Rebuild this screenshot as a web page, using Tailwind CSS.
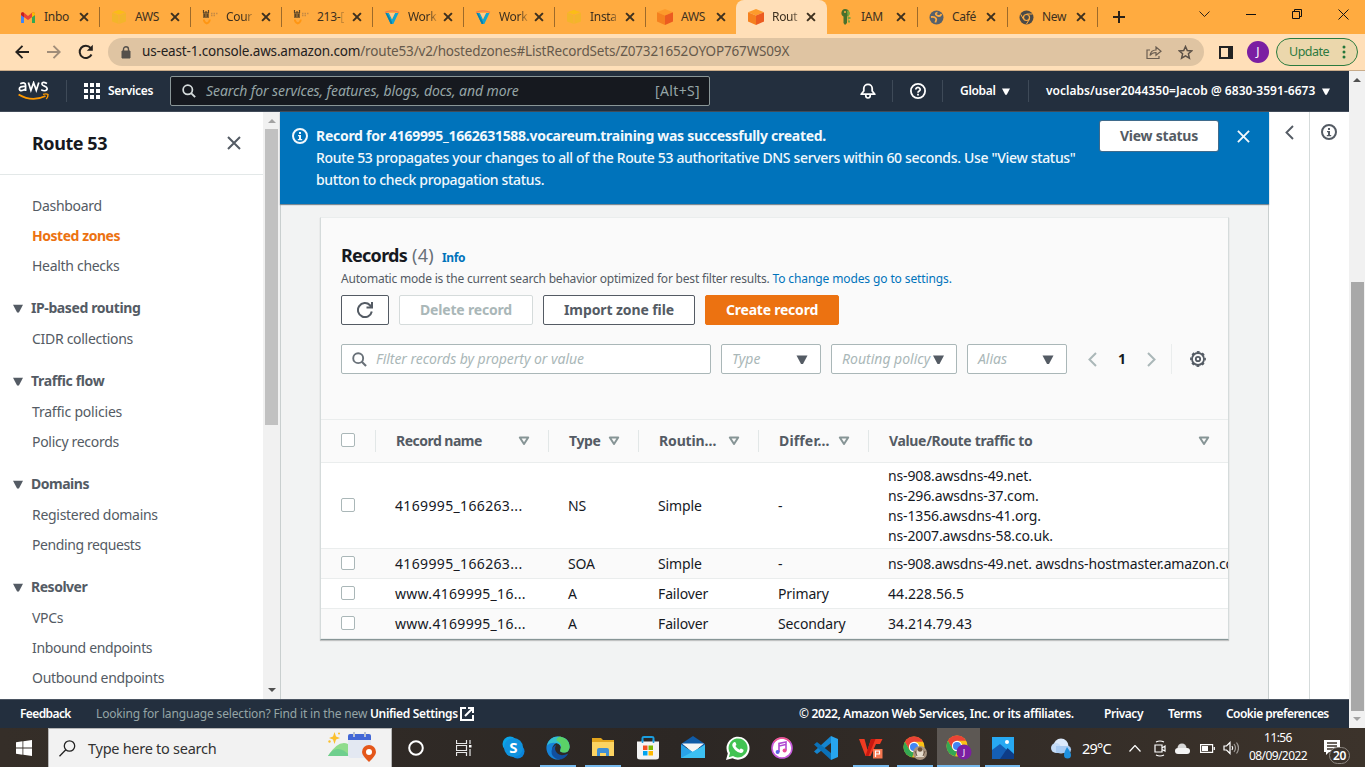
<!DOCTYPE html>
<html lang="en">
<head>
<meta charset="utf-8">
<title>Route 53 Console</title>
<script src="https://cdn.jsdelivr.net/npm/@tailwindcss/browser@4"></script>
</head>
<body class="h-[767px] w-[1365px] overflow-hidden bg-white font-['Noto_Sans','Liberation_Sans',sans-serif] text-sm text-[#16191f] antialiased">
<svg class="hidden">
  <defs>
    <symbol id="x" viewBox="0 0 10 10"><path d="M1.1 1.1 8.9 8.9M8.9 1.1 1.1 8.900" fill="none" stroke="currentColor" stroke-width="2"/></symbol>
    <symbol id="close" viewBox="0 0 14 14"><path d="M1 1 13 13M13 1 1 13" fill="none" stroke="currentColor" stroke-width="2"/></symbol>
    <symbol id="cube" viewBox="0 0 18 18"><path d="M9 1 17 4.3 9 7.6 1 4.3Z" fill="#fd9a2b"/><path d="M1 4.3 9 7.6V17L1 13.6Z" fill="#f5801f"/><path d="M17 4.3 9 7.6V17l8-3.4Z" fill="#ec5b20"/></symbol>
    <symbol id="ycube" viewBox="0 0 16 16"><path d="M8 1 15 3.5v9L8 15 1 12.500v-9Z" fill="#f3b52b"/><path d="M8 1 15 3.500 8 6 1 3.500Z" fill="#fbbd17"/><path d="M8 6v9M1 3.500 8 6l7-2.500" stroke="#ffa93f" fill="none" stroke-width=".8"/></symbol>
    <symbol id="voc" viewBox="0 0 18 16"><path d="M1 3h6v6H1Z" fill="#8f6630"/><path d="M1.500 1v3M4 2v2M6.500 1v3M2.500 5v3M5.500 5v3" stroke="#5d4526" stroke-width="1.200"/><path d="M9 4.500h7M9 6.500h5" stroke="#c58a45" stroke-width="1.300" stroke-dasharray="1.500 1"/><path d="M1.800 10.500c0 2 1.200 3.200 3 4 1.800-.8 3-2 3-4" fill="none" stroke="#ff9613" stroke-width="1.800"/></symbol>
    <symbol id="vee" viewBox="0 0 16 16"><path d="M1.500 4H5l3 6.500L11 4h3.500L9.300 15H6.700Z" fill="#14a5cf"/><path d="M1.500 4 3 4 8 13v2H6.700Z" fill="#0b7fa8"/><path d="M1 3.300Q8 .3 15 3.300" fill="none" stroke="#f3764a" stroke-width="1.300"/><path d="M5 4h6L8 10Z" fill="#ffc98c"/></symbol>
    <symbol id="tri" viewBox="0 0 11 9"><path d="M0 .5h11L6.500 9h-2Z" fill="currentColor"/></symbol>
    <symbol id="triO" viewBox="0 0 12 10"><path d="M1.800 1.500h8.400L6 8Z" fill="none" stroke="currentColor" stroke-width="2" stroke-linejoin="round"/></symbol>
    <symbol id="search" viewBox="0 0 16 16"><circle cx="6.600" cy="6.600" r="5.300" fill="none" stroke="currentColor" stroke-width="2"/><path d="M10.400 10.400 15 15" stroke="currentColor" stroke-width="2.200"/></symbol>
    <symbol id="info" viewBox="0 0 16 16"><circle cx="8" cy="8" r="7" fill="none" stroke="currentColor" stroke-width="2"/><path d="M7 4h2v2H7ZM6 7h3v4h1.200v1.300H5.800V11H7V8.300H6Z" fill="currentColor"/></symbol>
    <symbol id="chrome" viewBox="0 0 24 24"><circle cx="12" cy="12" r="11.500" fill="#fbc116"/><path d="M2.040 6.250A11.500 11.500 0 0 1 21.960 6.250H12L7 14.900Z" fill="#ea4335"/><path d="M2.040 6.250 7 14.900Q9 17.500 12 17.500L10 23.300A11.500 11.500 0 0 1 2.040 6.250" fill="#34a853"/><circle cx="12" cy="12" r="5.600" fill="#fff"/><circle cx="12" cy="12" r="4.400" fill="#4285f4"/></symbol>
  </defs>
</svg>

<!-- Browser tab strip -->
<header class="flex h-[34px] bg-[#ffab40] pl-2 text-[12px] tracking-[-0.3px] text-[#3d301f] [&_i]:mr-[-1px]">
  <div class="flex w-[91px] items-center py-[7px]"><svg class="ml-[13px] h-[11px] w-[14px] shrink-0" viewBox="0 0 14 11"><path d="M0 2v9h3V4.500Z" fill="#4285f4"/><path d="M14 2v9h-3V4.500Z" fill="#34a853"/><path d="M0 1.500Q1-.5 3 .8L7 4l4-3.200Q13-.5 14 1.500V3L7 8 0 3Z" fill="#ea4335"/><path d="M11 .8Q13-.5 14 1.500V3l-3 2.200Z" fill="#fbbc04"/><path d="M0 1.500V3l3 2.200V.8Q1-.5 0 1.500" fill="#c5221f"/></svg><span class="ml-[9px] w-[28px] shrink-0 whitespace-nowrap">Inbo</span><svg class="ml-[7px] size-[10px] shrink-0"><use href="#x"/></svg><i class="ml-auto h-5 w-px bg-[#9d6a2a]"></i></div>
  <div class="flex w-[91px] items-center py-[7px]"><svg class="ml-3 size-4 shrink-0"><use href="#ycube"/></svg><span class="ml-2 w-[28px] shrink-0 whitespace-nowrap">AWS</span><svg class="ml-[7px] size-[10px] shrink-0"><use href="#x"/></svg><i class="ml-auto h-5 w-px bg-[#9d6a2a]"></i></div>
  <div class="flex w-[91px] items-center py-[7px]"><svg class="ml-3 h-4 w-[18px] shrink-0"><use href="#voc"/></svg><span class="ml-1.5 w-[27px] shrink-0 whitespace-nowrap [mask-image:linear-gradient(to_right,#000_70%,#0003)]">Cour</span><svg class="ml-2 size-[10px] shrink-0"><use href="#x"/></svg><i class="ml-auto h-5 w-px bg-[#9d6a2a]"></i></div>
  <div class="flex w-[91px] items-center py-[7px]"><svg class="ml-3 h-4 w-[18px] shrink-0"><use href="#voc"/></svg><span class="ml-1.5 w-[28px] shrink-0 whitespace-nowrap">213-<span class="opacity-30">[</span></span><svg class="ml-[7px] size-[10px] shrink-0"><use href="#x"/></svg><i class="ml-auto h-5 w-px bg-[#9d6a2a]"></i></div>
  <div class="flex w-[91px] items-center py-[7px]"><svg class="ml-3 size-4 shrink-0"><use href="#vee"/></svg><span class="ml-2 w-[29px] shrink-0 whitespace-nowrap [mask-image:linear-gradient(to_right,#000_70%,#0003)]">Work</span><svg class="ml-[6px] size-[10px] shrink-0"><use href="#x"/></svg><i class="ml-auto h-5 w-px bg-[#9d6a2a]"></i></div>
  <div class="flex w-[91px] items-center py-[7px]"><svg class="ml-3 size-4 shrink-0"><use href="#vee"/></svg><span class="ml-2 w-[29px] shrink-0 whitespace-nowrap [mask-image:linear-gradient(to_right,#000_70%,#0003)]">Work</span><svg class="ml-[6px] size-[10px] shrink-0"><use href="#x"/></svg><i class="ml-auto h-5 w-px bg-[#9d6a2a]"></i></div>
  <div class="flex w-[91px] items-center py-[7px]"><svg class="ml-3 size-4 shrink-0"><use href="#ycube"/></svg><span class="ml-2 w-[28px] shrink-0 whitespace-nowrap [mask-image:linear-gradient(to_right,#000_70%,#0003)]">Insta</span><svg class="ml-[7px] size-[10px] shrink-0"><use href="#x"/></svg><i class="ml-auto h-5 w-px bg-[#9d6a2a]"></i></div>
  <div class="flex w-[91px] items-center py-[7px]"><svg class="ml-[11px] size-[18px] shrink-0"><use href="#cube"/></svg><span class="ml-[7px] w-[28px] shrink-0 whitespace-nowrap">AWS</span><svg class="ml-[7px] size-[10px] shrink-0"><use href="#x"/></svg></div>
  <div class="flex w-[91px] items-center rounded-t-lg bg-[#ffdfb8]"><svg class="ml-[11px] size-[18px] shrink-0"><use href="#cube"/></svg><span class="ml-[7px] w-[28px] shrink-0 whitespace-nowrap [mask-image:linear-gradient(to_right,#000_70%,#0003)]">Rout</span><svg class="ml-[6px] size-[10px] shrink-0"><use href="#x"/></svg></div>
  <div class="flex w-[90px] items-center py-[7px]"><svg class="ml-3 h-4 w-[14px] shrink-0" viewBox="0 0 14 16"><path d="M6 0a4.500 4 0 0 1 2 7.500V14l-2 2-1.500-2V7.500A4 4 0 0 1 6 0" fill="#48702c"/><path d="M8 1.500a3 3 0 0 1 1.500 5.500V8h2v2h-2v1.500h1.500v2H9Z" fill="#7aa63e"/><circle cx="6" cy="3" r="1" fill="#ffab40"/></svg><span class="ml-[8px] w-[29px] shrink-0 whitespace-nowrap">IAM</span><svg class="ml-[6px] size-[10px] shrink-0"><use href="#x"/></svg><i class="ml-auto h-5 w-px bg-[#9d6a2a]"></i></div>
  <div class="flex w-[90px] items-center py-[7px]"><svg class="ml-3 size-[15px] shrink-0" viewBox="0 0 15 15"><circle cx="7.500" cy="7.500" r="7" fill="#56616c"/><path d="M8.500 2.500C6.500 3 6 4.500 8 5.500s3.500.5 4.500-1.500M2 7c2.500-.5 4 0 5 1.500s-.5 2-.5 4" fill="none" stroke="#ffab40" stroke-width="1.800"/></svg><span class="ml-2 w-[28px] shrink-0 whitespace-nowrap">Café</span><svg class="ml-[6px] size-[10px] shrink-0"><use href="#x"/></svg><i class="ml-auto h-5 w-px bg-[#9d6a2a]"></i></div>
  <div class="flex w-[90px] items-center py-[7px]"><svg class="ml-3 size-[15px] shrink-0" viewBox="0 0 15 15"><circle cx="7.500" cy="7.500" r="7" fill="#4b4a48"/><circle cx="7.500" cy="7.500" r="3" fill="#4b4a48" stroke="#ffab40" stroke-width="1.200"/><path d="M7.500 4h6M4.500 9.200 1.700 4.300M10.500 9.200 7.500 14" stroke="#ffab40" stroke-width="1"/></svg><span class="ml-2 w-[28px] shrink-0 whitespace-nowrap">New</span><svg class="ml-[6px] size-[10px] shrink-0"><use href="#x"/></svg><i class="ml-auto h-5 w-px bg-[#9d6a2a]"></i></div>
  <svg class="mt-[11px] ml-[16px] size-3" viewBox="0 0 12 12"><path d="M6 0v12M0 6h12" stroke="#2a2118" stroke-width="2"/></svg>
  <svg class="mt-[11px] ml-[74px] h-[6px] w-[11px]" viewBox="0 0 11 6"><path d="m.5.5 5 5 5-5" fill="none" stroke="#2a2118"/></svg>
  <svg class="mt-[14px] ml-[36px] h-px w-[10px] bg-[#111]"></svg>
  <svg class="mt-[9px] ml-[36px] size-[10px]" viewBox="0 0 10 10"><path d="M2.500 2.500V.5h7v7h-2M.5 2.500h7v7h-7Z" fill="none" stroke="#111"/></svg>
  <svg class="mt-[9px] ml-[36px] size-[11px]" viewBox="0 0 11 11"><path d="m.5.5 10 10m0-10-10 10" stroke="#111"/></svg>
</header>

<!-- Address bar -->
<div class="flex h-[37px] items-center border-b border-[#c9ac8a] bg-[#ffdfb8] text-[#25211d]">
  <svg class="ml-[15px] h-[14px] w-[14px]" viewBox="0 0 14 14"><path d="M7.500.8 1.300 7l6.200 6.200M1.300 7H14" fill="none" stroke="currentColor" stroke-width="1.900"/></svg>
  <svg class="ml-[18px] h-[14px] w-[14px] text-[#a08d79]" viewBox="0 0 14 14"><path d="M6.500.8 12.700 7l-6.200 6.200M12.700 7H0" fill="none" stroke="currentColor" stroke-width="1.900"/></svg>
  <svg class="ml-[17px] size-4" viewBox="0 0 16 16"><path d="M13.500 10.500A6.200 6.200 0 1 1 12.600 3.800" fill="none" stroke="currentColor" stroke-width="2"/><path d="M14.800.8V6.800H8.800Z" fill="currentColor"/></svg>
  <div class="ml-[14px] flex h-[28px] w-[1096px] items-center rounded-full bg-[#dfc4a2]">
    <svg class="ml-[13px] h-[13px] w-[10px]" viewBox="0 0 10 13"><path d="M1 5h8v7H1Z" fill="#55504b" stroke="#55504b"/><path d="M2.500 5V3.200a2.500 2.500 0 0 1 5 0V5" fill="none" stroke="#55504b" stroke-width="1.400"/></svg>
    <span class="ml-[11px] w-[1000px] whitespace-nowrap text-[13.500px] tracking-[-0.165px] text-[#66594b]"><span class="text-[#25211d]">us-east-1.console.aws.amazon.com</span>/route53/v2/hostedzones#ListRecordSets/Z07321652OYOP767WS09X</span>
    <svg class="ml-[4px] h-[13px] w-[16px]" viewBox="0 0 16 13"><path d="M4 4H1v8.500h12V10M4 9.500c.5-4 3-5.500 6-5.500V1l5 4.300-5 4V6.500C7.500 6.500 5.500 7.300 4 9.500Z" fill="none" stroke="#6a5d50" stroke-width="1.200"/></svg>
    <svg class="ml-[16px] size-[15px]" viewBox="0 0 15 15"><path d="m7.500 1.500 1.800 4 4.400.4-3.300 2.900 1 4.300-3.900-2.300-3.900 2.300 1-4.300L1.300 5.900l4.400-.4Z" fill="none" stroke="#5c5147" stroke-width="1.500"/></svg>
  </div>
  <svg class="ml-[15px] h-[13px] w-[14px]" viewBox="0 0 14 13"><path d="M1 1h12v11H1Z" fill="#ffdfb8" stroke="#222" stroke-width="2"/><path d="M9 1h4v11H9Z" fill="#222"/></svg>
  <div class="ml-[14px] flex size-[22px] items-center justify-center rounded-full bg-[#7b1fa2] text-[12px] text-white">J</div>
  <div class="ml-[7px] flex h-[28px] w-[82px] items-center rounded-full border border-[#2b7b3f] bg-[#ebd7ac] pl-[12px] text-[12.500px] tracking-[-0.5px] text-[#2f7a41]">Update<svg class="ml-auto mr-[11px] h-[14px] w-[4px]" viewBox="0 0 4 14"><circle cx="2" cy="2" r="1.500" fill="#24763b"/><circle cx="2" cy="7" r="1.500" fill="#24763b"/><circle cx="2" cy="12" r="1.500" fill="#24763b"/></svg></div>
</div>

<div class="flex h-[657px]">
<div class="flex w-[1349px] flex-col">
  <!-- Console navigation -->
  <nav class="flex h-[41px] shrink-0 items-center border-b border-[#414b59] bg-[#232f3e] text-[12px] font-semibold text-white">
    <svg class="ml-[18px] h-[20px] w-[31px]" viewBox="0 0 31 20"><g fill="none" stroke="#fff" stroke-width="1.700"><path d="M2.200 2.800Q7.600.5 7.600 4.500V10M7.600 5.500Q1.300 5 1.300 8 2 10.500 5 9.300T7.600 7"/><path d="m10.400 1.500 2.500 7.800 2.700-7.600 2.700 7.600 2.500-7.800"/><path d="M29 2.500Q24-.1 23.900 3C24 5.500 29.200 4.800 29.200 7.700 28.800 10.700 25 9.800 23.200 8.800"/></g><path d="M.6 13.500Q14 21.500 27.500 15" fill="none" stroke="#f90" stroke-width="1.900"/><path d="M25 13.400Q28.500 12.400 30 13.500q.2 2.500-1.800 4.500" fill="none" stroke="#f90" stroke-width="1.400"/></svg>
    <i class="ml-[17px] h-[22px] w-px bg-[#3e4a58]"></i>
    <svg class="ml-[17px] size-4" viewBox="0 0 16 16" fill="#fff"><path d="M0 0h4v4H0ZM6 0h4v4H6ZM12 0h4v4h-4ZM0 6h4v4H0ZM6 6h4v4H6ZM12 6h4v4h-4ZM0 12h4v4H0ZM6 12h4v4H6ZM12 12h4v4h-4Z"/></svg>
    <span class="ml-2 w-[46px] tracking-[-0.35px]">Services</span>
    <div class="ml-[16px] flex h-[30px] w-[540px] items-center rounded-[2px] border border-[#8a9697] bg-[#16191f] pr-[9px] pl-[11px] text-sm font-normal text-[#95a5a6]">
      <svg class="size-[14px] text-[#d5dbdb]"><use href="#search" width="14" height="14"/></svg>
      <span class="ml-[10px] whitespace-nowrap italic tracking-[-0.08px]">Search for services, features, blogs, docs, and more</span>
      <span class="ml-auto tracking-[0.35px]">[Alt+S]</span>
    </div>
    <svg class="ml-[150px] size-4" viewBox="0 0 16 16"><path d="M1.200 11.200h13.600L12.200 8V5.500A4.200 4.200 0 0 0 3.800 5.500V8Z" fill="none" stroke="#fff" stroke-width="1.800" stroke-linejoin="round"/><path d="M5.800 11.500v1.300a2.200 2.200 0 0 0 4.400 0v-1.300" fill="none" stroke="#fff" stroke-width="1.700"/></svg>
    <i class="ml-[16px] h-[22px] w-px bg-[#3e4a58]"></i>
    <svg class="ml-[17px] size-4" viewBox="0 0 16 16"><circle cx="8" cy="8" r="7.100" fill="none" stroke="#fff" stroke-width="1.800"/><path d="M5.800 6.500a2.200 2 0 1 1 3.400 1.600Q8 8.800 8 9.700" fill="none" stroke="#fff" stroke-width="1.700"/><path d="M7.100 10.800h1.800v1.700H7.100Z" fill="#fff"/></svg>
    <i class="ml-[16px] h-[22px] w-px bg-[#3e4a58]"></i>
    <span class="ml-[17px] w-[36px] tracking-[-0.3px]">Global</span><svg class="ml-[6px] h-[7px] w-[8px]"><use href="#tri" width="8" height="7"/></svg>
    <i class="ml-[18px] h-[22px] w-px bg-[#3e4a58]"></i>
    <span class="ml-[17px] w-[270px] whitespace-nowrap tracking-[0.03px]">voclabs/user2044350=Jacob @ 6830-3591-6673</span><svg class="ml-[6px] h-[7px] w-[8px]"><use href="#tri" width="8" height="7"/></svg>
  </nav>

  <div class="flex h-[587px] shrink-0">
    <!-- Service menu -->
    <aside class="flex w-[263px] flex-col tracking-[-0.3px] text-[#545b64]">
      <div class="flex h-[63px] shrink-0 items-center border-b border-[#e3e8e8] pr-[22px] pl-8"><h2 class="text-lg font-bold tracking-[-0.45px] text-[#16191f]">Route 53</h2><svg class="ml-auto size-[14px]"><use href="#close"/></svg></div>
      <div class="pt-4 pl-8 [&>a]:flex [&>a]:h-[30px] [&>a]:items-center">
        <a>Dashboard</a><a class="font-bold tracking-[-0.46px] text-[#ec7211]">Hosted zones</a><a>Health checks</a>
        <h3 class="mt-[11px] -ml-[19px] flex h-8 items-center font-bold tracking-[-0.4px]"><svg class="mr-2 h-[9px] w-[10px]"><use href="#tri" width="10" height="9"/></svg>IP-based routing</h3>
        <a>CIDR collections</a>
        <h3 class="mt-[11px] -ml-[19px] flex h-8 items-center font-bold tracking-[-0.36px]"><svg class="mr-2 h-[9px] w-[10px]"><use href="#tri" width="10" height="9"/></svg>Traffic flow</h3>
        <a class="tracking-[-0.2px]">Traffic policies</a><a>Policy records</a>
        <h3 class="mt-[11px] -ml-[19px] flex h-8 items-center font-bold tracking-[-0.48px]"><svg class="mr-2 h-[9px] w-[10px]"><use href="#tri" width="10" height="9"/></svg>Domains</h3>
        <a>Registered domains</a><a class="tracking-[-0.4px]">Pending requests</a>
        <h3 class="mt-[11px] -ml-[19px] flex h-8 items-center font-bold tracking-[-0.48px]"><svg class="mr-2 h-[9px] w-[10px]"><use href="#tri" width="10" height="9"/></svg>Resolver</h3>
        <a>VPCs</a><a class="tracking-[-0.36px]">Inbound endpoints</a><a>Outbound endpoints</a>
      </div>
    </aside>
    <div class="flex w-[17px] flex-col items-center bg-[#f1f1f1]">
      <svg class="mt-[7px] h-[4px] w-[8px]" viewBox="0 0 8 4"><path d="m4 0 4 4H0Z" fill="#a3a3a3"/></svg>
      <div class="mt-[6px] h-[296px] w-[13px] bg-[#c1c1c1]"></div>
      <svg class="mt-auto mb-[7px] h-[4px] w-[8px]" viewBox="0 0 8 4"><path d="m4 4 4-4H0Z" fill="#505050"/></svg>
    </div>

    <main class="flex w-[989px] flex-col border-r border-l border-[#c9cfcf] bg-[#f2f3f3]">
      <div class="relative -mx-px flex h-[92px] w-[989px] shrink-0 bg-[#0073bb] text-[#f2f8fc] shadow-[0_1px_1px_#7b8a94]">
        <svg class="mt-4 ml-3 size-4"><use href="#info"/></svg>
        <div class="mt-[13px] ml-2 w-[784px] whitespace-nowrap leading-[22px]">
          <p class="font-bold tracking-[-0.28px]">Record for 4169995_1662631588.vocareum.training was successfully created.</p>
          <p class="font-medium tracking-[-0.34px]">Route 53 propagates your changes to all of the Route 53 authoritative DNS servers within 60 seconds. Use "View status"<br>button to check propagation status.</p>
        </div>
        <button class="mt-[9px] h-[30px] w-[118px] rounded-[2px] bg-white font-bold tracking-[-0.24px] text-[#545b64] shadow-[0_0_0_1px_#3f6b8c]">View status</button>
        <svg class="mt-[18px] ml-[19px] size-[13px]"><use href="#close"/></svg>
      </div>

      <!-- Records table -->
      <section class="mt-[13px] ml-[39px] flex h-[423px] w-[909px] flex-col border border-[#d5dbdb] border-t-[#eaeded] border-b-[#879596] bg-[#fafafa] shadow-[0_1px_1px_#0003]">
        <div class="h-[201px] shrink-0 px-5 pt-[23px]">
          <div class="flex h-6 items-baseline text-lg"><h1 class="font-bold tracking-[-0.74px]">Records</h1><span class="ml-[5px] tracking-[0.3px] text-[#687078]">(4)</span><a class="ml-[8px] text-xs font-bold tracking-[-0.4px] text-[#0073bb]">Info</a></div>
          <p class="mt-1 text-xs leading-5 tracking-[-0.2px] whitespace-nowrap text-[#545b64]">Automatic mode is the current search behavior optimized for best filter results. <a class="tracking-[-0.11px] text-[#0073bb]">To change modes go to settings.</a></p>
          <div class="mt-[6px] flex gap-[10px] font-bold tracking-[-0.14px] [&>button]:h-[30px] [&>button]:rounded-[2px] [&>button]:border">
            <button class="flex w-[48px] items-center justify-center border-[#545b64] bg-white text-[#545b64]"><svg class="size-4" viewBox="0 0 16 16"><path d="M14.800 9.500A7 7 0 1 1 13 3.200L15 5.300M15 0v5.500H9.500" fill="none" stroke="currentColor" stroke-width="2"/></svg></button>
            <button class="w-[134px] border-[#d5dbdb] bg-white tracking-[-0.18px] text-[#aab7b8]">Delete record</button>
            <button class="w-[152px] border-[#545b64] bg-white tracking-[-0.1px] text-[#545b64]">Import zone file</button>
            <button class="w-[134px] border-[#ec7211] bg-[#ec7211] tracking-[-0.22px] text-white">Create record</button>
          </div>
          <div class="mt-[19px] flex h-[30px] items-center italic text-[#aab7b8] [&>div]:flex [&>div]:h-[30px] [&>div]:items-center [&>div]:rounded-[2px] [&>div]:border [&>div]:border-[#aab7b8] [&>div]:bg-white [&>div]:pl-[10px]">
            <div class="w-[370px]"><svg class="size-[15px] text-[#687078]"><use href="#search" width="15" height="15"/></svg><span class="ml-[9px] tracking-[-0.04px]">Filter records by property or value</span></div>
            <div class="ml-[10px] w-[100px] text-[#aab7b8]">Type<svg class="ml-auto mr-[12px] h-[9px] w-[12px] text-[#545b64]"><use href="#tri"/></svg></div>
            <div class="ml-[10px] w-[126px] whitespace-nowrap">Routing policy<svg class="ml-auto mr-[12px] h-[9px] w-[11px] text-[#545b64]"><use href="#tri"/></svg></div>
            <div class="ml-[10px] w-[100px]">Alias<svg class="ml-auto mr-[12px] h-[9px] w-[12px] text-[#545b64]"><use href="#tri"/></svg></div>
            <svg class="ml-[21px] h-[15px] w-[9px]" viewBox="0 0 9 15"><path d="M8 1 1.500 7.500 8 14" fill="none" stroke="#aab7b8" stroke-width="2"/></svg>
            <span class="ml-[21px] w-2 font-bold not-italic text-[#16191f]">1</span>
            <svg class="ml-[21px] h-[15px] w-[9px]" viewBox="0 0 9 15"><path d="m1 1 6.500 6.500L1 14" fill="none" stroke="#aab7b8" stroke-width="2"/></svg>
            <i class="ml-[15px] h-[30px] w-px bg-[#eaeded]"></i>
            <svg class="ml-[18px] size-4" viewBox="0 0 16 16" fill="none" stroke="#545b64"><circle cx="8" cy="8" r="6" stroke-width="1.800"/><circle cx="8" cy="8" r="7.100" stroke-width="1.600" stroke-dasharray="2.800 2.776" stroke-dashoffset="1.400"/><circle cx="8" cy="8" r="2.200" stroke-width="1.800"/></svg>
          </div>
        </div>
        <div class="grid h-[44px] shrink-0 grid-cols-[54px_173px_90px_120px_110px_1fr] items-center border-y border-[#eaeded] font-bold tracking-[-0.34px] text-[#545b64] [&>div]:flex [&>div]:h-[22px] [&>div]:items-center [&>div]:border-l [&>div]:border-[#e2e7e7] [&>div]:pl-[20px] [&_svg]:ml-auto [&_svg]:h-[10px] [&_svg]:w-[12px] [&_svg]:text-[#879596]">
          <span class="mb-[3px] ml-5 size-[14px] rounded-[2px] border border-[#aab7b8] bg-white"></span>
          <div><span class="tracking-[-0.52px]">Record name</span><svg class="mr-[18px]"><use href="#triO"/></svg></div>
          <div>Type<svg class="mr-[18px]"><use href="#triO"/></svg></div>
          <div><span class="tracking-[-0.15px]">Routin…</span><svg class="mr-[18px]"><use href="#triO"/></svg></div>
          <div><span class="tracking-[0.15px]">Differ…</span><svg class="mr-[18px]"><use href="#triO"/></svg></div>
          <div><span class="tracking-[-0.34px]">Value/Route traffic to</span><svg class="mr-[18px]"><use href="#triO"/></svg></div>
        </div>
        <div class="flex min-h-0 grow flex-col tracking-[-0.14px] [&>div]:grid [&>div]:shrink-0 [&>div]:grid-cols-[74px_173px_90px_120px_110px_1fr] [&>div]:items-center [&>div]:overflow-hidden [&>div]:border-b [&>div]:border-[#eaeded] [&>div]:whitespace-nowrap [&>div>i]:mb-px [&>div>i]:ml-5 [&>div>i]:size-[14px] [&>div>i]:rounded-[2px] [&>div>i]:border [&>div>i]:border-[#aab7b8] [&>div>i]:bg-white">
          <div class="h-[86px] bg-white"><i></i><span class="tracking-[0.35px]">4169995_166263...</span><span>NS</span><span>Simple</span><span>-</span><p class="leading-5">ns-908.awsdns-49.net.<br>ns-296.awsdns-37.com.<br>ns-1356.awsdns-41.org.<br>ns-2007.awsdns-58.co.uk.</p></div>
          <div class="h-[30px]"><i></i><span class="tracking-[0.35px]">4169995_166263...</span><span>SOA</span><span>Simple</span><span>-</span><span class="w-[340px] overflow-hidden">ns-908.awsdns-49.net. awsdns-hostmaster.amazon.com</span></div>
          <div class="h-[30px] bg-white"><i></i><span class="tracking-[0.3px]">www.4169995_16...</span><span>A</span><span>Failover</span><span>Primary</span><span class="tracking-[0.06px]">44.228.56.5</span></div>
          <div class="h-[30px]"><i></i><span class="tracking-[0.3px]">www.4169995_16...</span><span>A</span><span>Failover</span><span>Secondary</span><span class="tracking-[0.06px]">34.214.79.43</span></div>
        </div>
      </section>
    </main>

    <div class="flex w-[41px] justify-center border-r border-[#d5dbdb] text-[#545b64]"><svg class="mt-[13px] h-[15px] w-[9px]" viewBox="0 0 9 15"><path d="M8 1 1.500 7.500 8 14" fill="none" stroke="currentColor" stroke-width="1.900"/></svg></div>
    <div class="flex w-[39px] pl-[11px] text-[#545b64]"><svg class="mt-[12px] size-4"><use href="#info"/></svg></div>
  </div>

  <footer class="flex h-[29px] items-center border-t border-[#4b5562] bg-[#232f3e] px-5 text-xs font-semibold whitespace-nowrap text-white">
    <span class="w-[51px] tracking-[-0.6px]">Feedback</span>
    <span class="ml-[25px] w-[274px] font-normal tracking-[-0.15px] text-[#95a5a6]">Looking for language selection? Find it in the new</span>
    <span class="w-[88px] tracking-[-0.35px]">Unified Settings</span>
    <svg class="ml-[2px] size-[14px]" viewBox="0 0 14 14"><path d="M6 1H1v12h12V8M8 1h5v5M13 1 5 9" fill="none" stroke="#fff" stroke-width="2"/></svg>
    <span class="ml-auto w-[275px] tracking-[-0.34px]">© 2022, Amazon Web Services, Inc. or its affiliates.</span>
    <span class="ml-[30px] w-[38px] tracking-[-0.45px]">Privacy</span>
    <span class="ml-[26px] w-[33px] tracking-[-0.45px]">Terms</span>
    <span class="ml-[25px] w-[103px] tracking-[-0.55px]">Cookie preferences</span>
  </footer>
</div>
<div class="flex w-4 flex-col items-end bg-[#f1f1f1]">
  <svg class="mt-[7px] mr-[4px] h-[4px] w-[8px]" viewBox="0 0 8 4"><path d="m4 0 4 4H0Z" fill="#505050"/></svg>
  <div class="mt-[200px] mr-px h-[429px] w-[13px] bg-[#a8a8a8]"></div>
  <svg class="mt-[6px] mr-[4px] h-[4px] w-[8px]" viewBox="0 0 8 4"><path d="m4 4 4-4H0Z" fill="#a3a3a3"/></svg>
</div>
</div>

<!-- Desktop taskbar -->
<div class="flex h-[39px] bg-linear-to-r from-[#352e28] via-[#2c2724] to-[#3c332b] text-white">
  <div class="flex w-12 items-center justify-center"><svg class="size-4" viewBox="0 0 16 16" fill="#fff"><path d="M0 2.200 6.500 1.300V7.600H0ZM7.300 1.200 16 0V7.600H7.300ZM0 8.400h6.500v6.300L0 13.800ZM7.300 8.400H16V16l-8.700-1.200Z"/></svg></div>
  <div class="flex w-[344px] items-center border border-b-0 border-[#b5b5b5] bg-[#f2f2f2] text-[#333]">
    <svg class="ml-[10px] size-[17px]" viewBox="0 0 17 17"><circle cx="10.500" cy="6" r="5.200" fill="none" stroke="#222" stroke-width="1.300"/><path d="M6.800 9.800.5 16.200" stroke="#222" stroke-width="1.300"/></svg>
    <span class="ml-[12px] text-[14.500px] tracking-[-0.27px]">Type here to search</span>
    <svg class="mr-[14px] mb-[2px] ml-auto h-[30px] w-[49px]" viewBox="0 0 49 30"><path d="M0 24Q8 11 16 11T22 24Z" fill="#8fdc8c"/><path d="M0 24Q4 17 10 17T22 24Z" fill="#6fcf8e"/><path d="M6.500 0 8 4.500l4 1.500-4 1.500L6.500 12 5 7.500 1 6l4-1.500Z" fill="#fbc02d"/><circle cx="11" cy="1.500" r="1" fill="#fbc02d"/><circle cx="1.500" cy="9.500" r="1.200" fill="#fbc02d"/><rect x="20" y="2" width="23" height="24" rx="3" fill="#e3e8f2"/><path d="M20 8V4q0-2 2-2h19q2 0 2 2v4Z" fill="#4267d6"/><path d="M26 0v5M37 0v5" stroke="#b8c1d1" stroke-width="2"/><path d="M41 13a7 7 0 0 1 7 7q0 3.500-7 10-7-6.500-7-10a7 7 0 0 1 7-7" fill="#e4571b"/><circle cx="41" cy="20" r="3" fill="#fff"/></svg>
  </div>
  <div class="flex w-12 items-center justify-center"><svg class="size-4" viewBox="0 0 16 16"><circle cx="8" cy="8" r="6.800" fill="none" stroke="#fff" stroke-width="2"/></svg></div>
  <div class="flex w-12 items-center justify-center"><svg class="size-4" viewBox="0 0 16 16"><path d="M.5 0v3.500h10V0M.5 16v-3.500h10V16M.5 5.500h10v5H.5ZM14 0v4M14 9v7" fill="none" stroke="#e8e8e8" stroke-width="1.200"/><path d="M13 5h2.500v2.500H13Z" fill="#fff"/></svg></div>
  <div class="flex w-[47px] items-center justify-center pl-[3px]"><svg class="size-[23px]" viewBox="0 0 23 23"><circle cx="8" cy="8" r="7.500" fill="#0aa5e8"/><circle cx="15.500" cy="15.500" r="7" fill="#0a84dc"/><circle cx="11.500" cy="11.500" r="9.500" fill="#1093de"/><text x="11.500" y="17" text-anchor="middle" font-family="Noto Sans" font-size="15" font-weight="700" fill="#fff">S</text></svg></div>
  <div class="flex w-[45px] items-center justify-center"><div class="flex h-full w-9 items-center justify-center border-b-2 border-[#76b9ed] pt-0.5"><svg class="size-6" viewBox="0 0 24 24"><path d="M.4 12A11.600 11.600 0 0 1 12 .4q5 0 6 6Q14 5.500 10.500 7 5 9.500 7 16q2 5.500 7 7.300-1 .3-2 .3A11.600 11.600 0 0 1 .4 12" fill="#1683d8"/><path d="M1 9.500Q3.500.4 12 .4 23.600 1 23.600 11q-.5 5.500-5.600 5.500-5 0-3.500-3Q16 8.500 10 7 4 5.800 1 9.500" fill="#35bfd0"/><path d="M14 .6q9.600 2.400 9.600 10.400-.5 5.500-5.600 5.500-5 0-3.500-3 2.500-6-4-9Q10 2 14 .6" fill="#5bd267"/><path d="M10.200 9Q7.500 13 11 17t11.300.5Q19 23.600 12.500 23.600 5 21.500 5.500 15 6.500 10 10.200 9" fill="#114f9e"/></svg></div></div>
  <div class="flex w-[45px] items-center justify-center"><div class="flex h-full w-9 items-center justify-center border-b-2 border-[#76b9ed] pt-0.5"><svg class="h-[19px] w-[22px]" viewBox="0 0 22 19"><path d="M0 0h9l2 2h11v16H0Z" fill="#e3a51d"/><path d="M0 4h22v14H0Z" fill="#fcd462"/><path d="M5 18v-6q0-2 2-2h8q2 0 2 2v6h-3v-3H8v3Z" fill="#3f8fd4"/></svg></div></div>
  <div class="flex w-[45px] items-center justify-center"><svg class="size-6" viewBox="0 0 24 24"><path d="M6.500 7V2Q6.500 1 8 1h8q1.500 0 1.500 1v5" fill="none" stroke="#1a9ee0" stroke-width="2"/><path d="M1 5.500h22V21q0 2.500-3 2.500H4Q1 23.500 1 21Z" fill="#f3f3f3"/><path d="M6.500 4v3M17.500 4v3" stroke="#1a9ee0" stroke-width="1.500"/><path d="M7 9.500h4.500V14H7Z" fill="#f25022"/><path d="M12.500 9.500H17V14h-4.500Z" fill="#7fba00"/><path d="M7 15h4.500v4.500H7Z" fill="#00a4ef"/><path d="M12.500 15H17v4.500h-4.500Z" fill="#ffb900"/></svg></div>
  <div class="flex w-[45px] items-center justify-center"><svg class="h-[23px] w-6" viewBox="0 0 24 23"><path d="M0 8 12 0l12 8v3H0Z" fill="#105ba6"/><path d="M2 8h20l-10 9Z" fill="#f5f5f5"/><path d="M0 8.500 12 16l12-7.500V22H0Z" fill="#29a3e8"/><path d="M1 7.500h22L12 15.500Z" fill="#f5f5f5"/><path d="M0 22 24 9v13Z" fill="#3cc0f2"/></svg></div>
  <div class="flex w-[45px] items-center justify-center"><svg class="size-6" viewBox="0 0 24 24"><path d="M0 24 1.800 17.500A11.500 11.500 0 1 1 6.500 22.300Z" fill="#fff"/><path d="M2.800 21.200 4 17A9.500 9.500 0 1 1 7 20Z" fill="#42c352"/><path d="M8.500 6q.8-.3 1.200.7l.7 1.800q0 .6-1 1.600 1.400 2.600 4.200 3.700.9-1.400 1.500-1.300l2.400 1.200q.4 3-2.800 3.300-2.500 0-5.700-3-2.800-3-2.800-5Q6.500 6.500 8.500 6" fill="#fff"/></svg></div>
  <div class="flex w-[44px] items-center justify-center"><svg class="size-[22px]" viewBox="0 0 22 22"><circle cx="11" cy="11" r="10" fill="#fff" stroke="#c65adb" stroke-width="1.600"/><path d="M3 5A10 10 0 0 1 19 5" fill="none" stroke="#f0568b" stroke-width="1.600"/><path d="M8 15V6.500l7-1.500v8.500M8 9l7-1.500" fill="none" stroke="#b14bd3" stroke-width="1.600"/><circle cx="6.600" cy="15" r="2" fill="#5d63e6"/><circle cx="13.600" cy="13.600" r="2" fill="#e94c94"/></svg></div>
  <div class="flex w-[44px] items-center justify-center"><svg class="size-6" viewBox="0 0 24 24"><path d="M17 0 24 3v18l-7 3Z" fill="#27a5ef"/><path d="M17 0v7L3 18 0 15.500Z" fill="#1585cf"/><path d="M17 24v-7L3 6 0 8.500Z" fill="#0b72b9"/></svg></div>
  <div class="flex w-[45px] items-center justify-center"><div class="flex h-full w-9 items-center justify-center border-b-2 border-[#76b9ed] pt-1"><svg class="h-[21px] w-6" viewBox="0 0 24 21"><path d="M0 1h5.500L8.500 12 12 1h11.500L21 6h-4l-5.500 12H6.500Z" fill="#ef3b22"/><path d="M12 1h4.500l-7 17h-3l2-6Z" fill="#c9180f"/><path d="M14 11h9.500v9.500H14Z" fill="#f4764f"/><path d="M16.500 19v-6h4v3h-4" fill="none" stroke="#fff" stroke-width="1.200"/></svg></div></div>
  <div class="flex w-[44px] items-center justify-center"><div class="flex h-full w-9 items-center justify-center border-b-2 border-[#76b9ed] pt-0.5"><svg class="size-6" viewBox="0 0 24 24"><use href="#chrome" width="22" height="22"/><circle cx="17" cy="17" r="7" fill="#a89480"/><path d="M13 21q1-9 4-9t4 9Z" fill="#e6dccd"/><circle cx="17" cy="13.500" r="2.300" fill="#68503b"/><path d="M12 15l2 5M22 15l-2 5" stroke="#6d5846"/></svg></div></div>
  <div class="flex w-[43px] items-center justify-center border-b-2 border-[#76b9ed] bg-[#5d5854] pt-0.5"><svg class="h-[25px] w-[26px]" viewBox="0 0 26 25"><use href="#chrome" width="22" height="22"/><circle cx="18" cy="17" r="7.500" fill="#7b1fa2"/><text x="18" y="20.500" text-anchor="middle" font-family="Noto Sans" font-size="9" fill="#fff">J</text></svg></div>
  <div class="ml-[5px] flex w-[35px] items-center justify-center border-b-2 border-[#76b9ed] pt-0.5"><svg class="size-[22px]" viewBox="0 0 22 22"><path d="M0 0h22v22H0Z" fill="#27a9f2"/><path d="M0 13 8 7l14 12v3H0Z" fill="#155fb5"/><path d="M8 22 15.500 11l6.500 6v5Z" fill="#0e3c86"/><circle cx="15" cy="5" r="2" fill="#fff"/></svg></div>
  <svg class="mt-[10px] ml-[31px] h-[21px] w-[24px]" viewBox="0 0 24 21"><circle cx="10" cy="8" r="7.500" fill="#dbe9fb"/><circle cx="5" cy="10" r="5" fill="#c5dcf7"/><path d="M5 8h13a4 4 0 0 1 0 7H5Z" fill="#a9cbf2"/><path d="M16 9q4 5.500 4 8a3.500 3.500 0 0 1-7 0q0-2.500 3-8" fill="#1e90dd"/></svg>
  <span class="mt-[10px] ml-[7px] w-[32px] text-[14.500px] leading-5 tracking-[-0.8px]">29°C</span>
  <svg class="mt-[17px] ml-[15px] h-[7px] w-[12px]" viewBox="0 0 12 7"><path d="m.5 6.500 5.500-6 5.500 6" fill="none" stroke="#fff" stroke-width="1.200"/></svg>
  <svg class="mt-[12px] ml-[13px] h-[17px] w-[12px]" viewBox="0 0 12 17"><path d="M2 2q4-2 8 0M2 15q4 2 8 0M1 5h7v7H1ZM8 8l3-2v5L8 9.500" fill="none" stroke="#fff" stroke-width="1.200"/></svg>
  <svg class="mt-[15px] ml-[9px] h-[11px] w-4" viewBox="0 0 16 11"><circle cx="7" cy="5" r="4.500" fill="#d8d8d8"/><path d="M3 5h9a3 3 0 0 1 0 6H3a3 3 0 0 1 0-6" fill="#f4f4f4"/></svg>
  <svg class="mt-[16px] ml-[9px] h-[9px] w-[15px]" viewBox="0 0 15 9"><path d="M.6.6h12v7.800H.6ZM14.300 3v3" fill="none" stroke="#fff" stroke-width="1.200"/><path d="M2 2h6v5H2Z" fill="#fff"/></svg>
  <svg class="mt-[13px] ml-[8px] h-[14px] w-4" viewBox="0 0 16 14"><path d="M1 5h2.500L7 1.500v11L3.500 9H1ZM9 5q1.500 2 0 4" fill="none" stroke="#fff" stroke-width="1.200"/><path d="M11 3q3 4 0 8M13.500 1.500q4 5.500 0 11" fill="none" stroke="#a09c98" stroke-width="1.200"/></svg>
  <div class="ml-[8px] w-[62px] pt-[1px] text-center text-[12px] leading-[18px] tracking-[-0.58px] whitespace-nowrap">11:56<br>08/09/2022</div>
  <div class="relative mt-[12px] ml-[15px] h-6 w-[28px]"><svg class="h-[15px] w-4" viewBox="0 0 16 15"><path d="M0 0h16v12H5l-3 3v-3H0Z" fill="#fff"/><path d="M3 3h10M3 6h10M3 9h6" stroke="#3c332b" stroke-width="1.300"/></svg><span class="absolute top-[7px] left-[5px] flex h-[17px] w-[21px] items-center justify-center rounded-full border border-[#8d8781] bg-[#3a322b] text-[12px] leading-none font-semibold tracking-[-0.4px]">20</span></div>
</div>
</body>
</html>
